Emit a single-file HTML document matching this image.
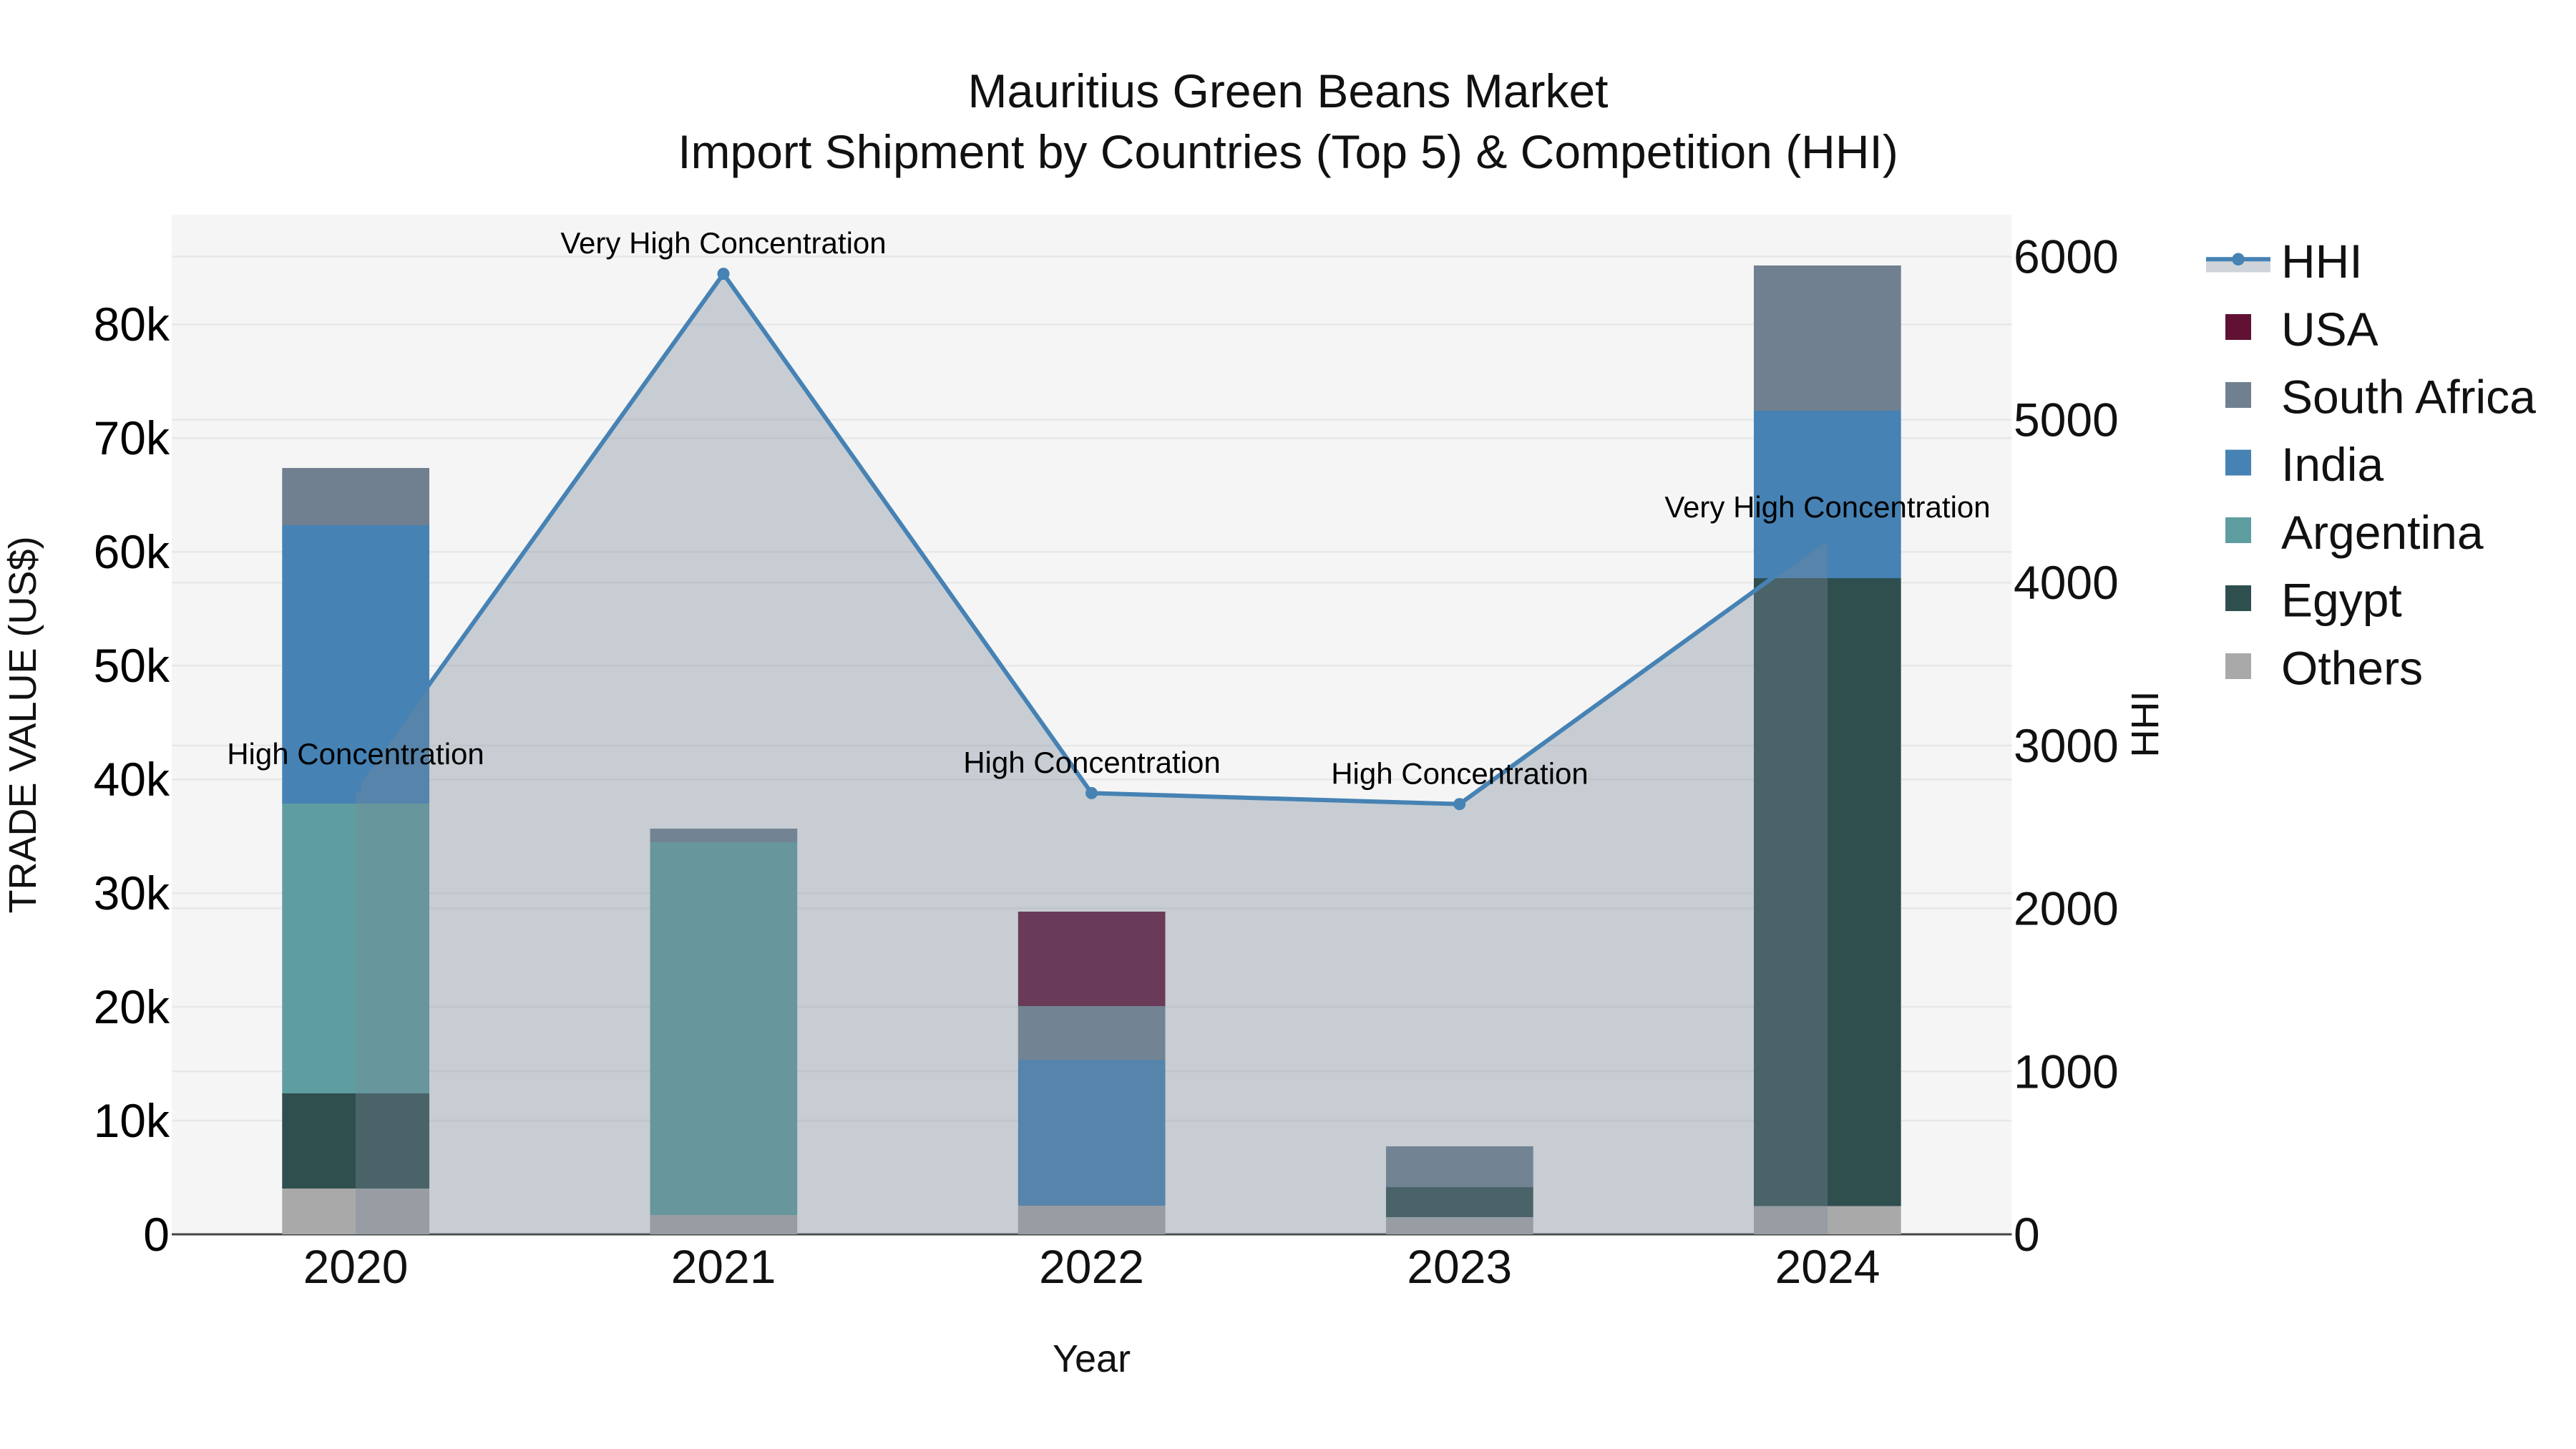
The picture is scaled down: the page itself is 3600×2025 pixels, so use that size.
<!DOCTYPE html>
<html><head><meta charset="utf-8"><style>
html,body{margin:0;padding:0;background:#fff;width:3600px;height:2025px;overflow:hidden}
svg{display:block}
text{font-family:"Liberation Sans",Arial,sans-serif}
</style></head><body>
<svg width="3600" height="2025" viewBox="0 0 3600 2025" xmlns="http://www.w3.org/2000/svg">
<rect width="3600" height="2025" fill="#fff"/>
<rect x="240" y="300" width="2571.5" height="1425" fill="#f5f5f5"/>
<g stroke="#e8e8e8" stroke-width="2.5">
<path d="M240 358.6H2811.5M240 586.4H2811.5M240 814.2H2811.5M240 1042H2811.5M240 1269.5H2811.5M240 1497.3H2811.5"/>
<path d="M240 453.4H2811.5M240 612.4H2811.5M240 771.3H2811.5M240 930.3H2811.5M240 1089.2H2811.5M240 1248.2H2811.5M240 1407.1H2811.5M240 1566H2811.5"/>
</g>
<path d="M240 1725H2811.5" stroke="#444" stroke-width="3"/>
<!-- bars -->
<g>
<rect x="394.3" y="1661" width="205.7" height="64" fill="#a9a9a9"/>
<rect x="394.3" y="1528" width="205.7" height="133" fill="#2f4f4f"/>
<rect x="394.3" y="1123" width="205.7" height="405" fill="#5f9ea0"/>
<rect x="394.3" y="734" width="205.7" height="389" fill="#4682b4"/>
<rect x="394.3" y="654" width="205.7" height="80" fill="#708090"/>

<rect x="908.5" y="1698" width="205.7" height="27" fill="#a9a9a9"/>
<rect x="908.5" y="1177" width="205.7" height="521" fill="#5f9ea0"/>
<rect x="908.5" y="1158" width="205.7" height="19" fill="#708090"/>

<rect x="1422.8" y="1685" width="205.7" height="40" fill="#a9a9a9"/>
<rect x="1422.8" y="1481" width="205.7" height="204" fill="#4682b4"/>
<rect x="1422.8" y="1406" width="205.7" height="75" fill="#708090"/>
<rect x="1422.8" y="1274" width="205.7" height="132" fill="#611134"/>

<rect x="1937" y="1701" width="205.7" height="24" fill="#a9a9a9"/>
<rect x="1937" y="1659" width="205.7" height="42" fill="#2f4f4f"/>
<rect x="1937" y="1602" width="205.7" height="57" fill="#708090"/>

<rect x="2451" y="1685.5" width="205.7" height="39.5" fill="#a9a9a9"/>
<rect x="2451" y="808" width="205.7" height="877.5" fill="#2f4f4f"/>
<rect x="2451" y="574" width="205.7" height="234" fill="#4682b4"/>
<rect x="2451" y="371" width="205.7" height="203" fill="#708090"/>
</g>
<!-- area + line -->
<path d="M497 1725V1100L1011 382.6L1525.5 1108.4L2039.7 1123.7L2554 752V1725Z" fill="#778899" fill-opacity="0.36"/>
<path d="M497 1100L1011 382.6L1525.5 1108.4L2039.7 1123.7L2554 752" fill="none" stroke="#4682b4" stroke-width="6"/>
<g fill="#4682b4">
<circle cx="497" cy="1100" r="8.5"/><circle cx="1011" cy="382.6" r="8.5"/><circle cx="1525.5" cy="1108.4" r="8.5"/><circle cx="2039.7" cy="1123.7" r="8.5"/><circle cx="2554" cy="752" r="8.5"/>
</g>
<!-- annotations -->
<g font-size="42" fill="#000" text-anchor="middle">
<text x="497" y="1068">High Concentration</text>
<text x="1011" y="354">Very High Concentration</text>
<text x="1526" y="1080">High Concentration</text>
<text x="2040" y="1095.5">High Concentration</text>
<text x="2554" y="723">Very High Concentration</text>
</g>
<!-- title -->
<g font-size="66" fill="#111" text-anchor="middle">
<text x="1800" y="150">Mauritius Green Beans Market</text>
<text x="1800" y="235">Import Shipment by Countries (Top 5) &amp; Competition (HHI)</text>
</g>
<!-- left ticks -->
<g font-size="66" fill="#000" text-anchor="end">
<text x="237" y="476">80k</text>
<text x="237" y="635">70k</text>
<text x="237" y="794">60k</text>
<text x="237" y="953">50k</text>
<text x="237" y="1112">40k</text>
<text x="237" y="1271">30k</text>
<text x="237" y="1430">20k</text>
<text x="237" y="1589">10k</text>
<text x="237" y="1748">0</text>
</g>
<!-- right ticks -->
<g font-size="66" fill="#111">
<text x="2814" y="381.5">6000</text>
<text x="2814" y="609.3">5000</text>
<text x="2814" y="837">4000</text>
<text x="2814" y="1064.8">3000</text>
<text x="2814" y="1292.5">2000</text>
<text x="2814" y="1520.3">1000</text>
<text x="2814" y="1748">0</text>
</g>
<!-- x ticks -->
<g font-size="66" fill="#111" text-anchor="middle">
<text x="497" y="1793">2020</text>
<text x="1011" y="1793">2021</text>
<text x="1525.5" y="1793">2022</text>
<text x="2039.7" y="1793">2023</text>
<text x="2554" y="1793">2024</text>
</g>
<text x="1525.5" y="1917" font-size="54" fill="#111" text-anchor="middle">Year</text>
<text transform="translate(50,1013) rotate(-90)" font-size="54" fill="#111" text-anchor="middle">TRADE VALUE (US$)</text>
<text transform="translate(3016,1012) rotate(-90)" font-size="54" fill="#111" text-anchor="middle">HHI</text>
<!-- legend -->
<rect x="3083" y="362" width="90" height="18.5" fill="#778899" fill-opacity="0.36"/>
<path d="M3083 362.3H3173" stroke="#4682b4" stroke-width="6"/>
<circle cx="3128" cy="362.3" r="8.75" fill="#4682b4"/>
<rect x="3110" y="439" width="36" height="36" fill="#611134"/>
<rect x="3110" y="534" width="36" height="36" fill="#708090"/>
<rect x="3110" y="628.5" width="36" height="36" fill="#4682b4"/>
<rect x="3110" y="723" width="36" height="36" fill="#5f9ea0"/>
<rect x="3110" y="818" width="36" height="36" fill="#2f4f4f"/>
<rect x="3110" y="913" width="36" height="36" fill="#a9a9a9"/>
<g font-size="66" fill="#111">
<text x="3188" y="388">HHI</text>
<text x="3188" y="483">USA</text>
<text x="3188" y="577.5">South Africa</text>
<text x="3188" y="672">India</text>
<text x="3188" y="767">Argentina</text>
<text x="3188" y="861.5">Egypt</text>
<text x="3188" y="956.5">Others</text>
</g>
</svg>
</body></html>
